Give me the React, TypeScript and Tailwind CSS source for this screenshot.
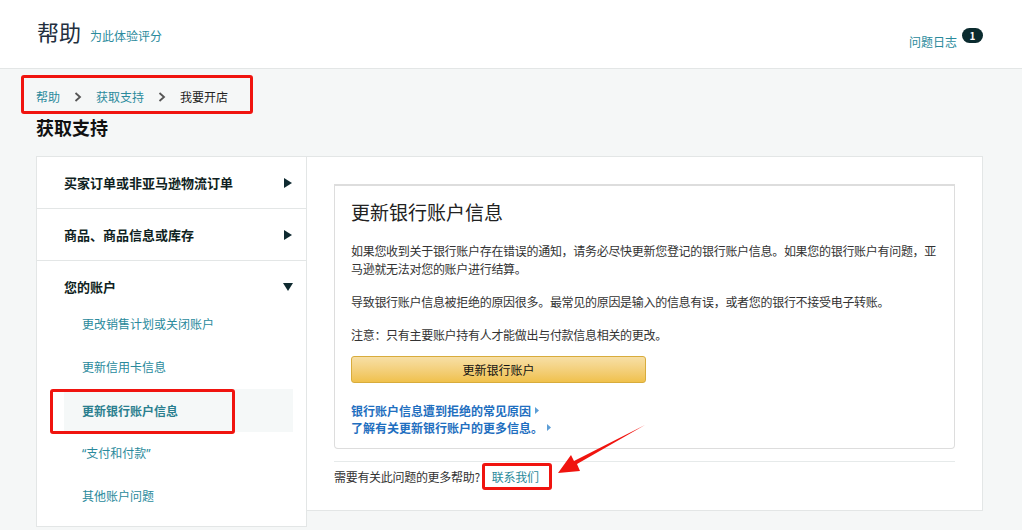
import React from "react";

const font = { fontFamily: '"Noto Sans CJK SC", "Noto Sans", sans-serif' };

const sections = [
  { title: "买家订单或非亚马逊物流订单", open: false },
  { title: "商品、商品信息或库存", open: false },
];

const accountItems = [
  "更改销售计划或关闭账户",
  "更新信用卡信息",
  "更新银行账户信息",
  "“支付和付款”",
  "其他账户问题",
];

function TriRight() {
  return (
    <svg width="8" height="10" viewBox="0 0 8 10" className="fill-[#0f2a30]">
      <path d="M0 0 L8 5 L0 10 Z" />
    </svg>
  );
}

function TriDown() {
  return (
    <svg width="10" height="8" viewBox="0 0 10 8" className="fill-[#0f2a30]">
      <path d="M0 0 L10 0 L5 8 Z" />
    </svg>
  );
}

function Caret() {
  return (
    <svg width="4" height="7" viewBox="0 0 4 7" className="ml-1 inline-block fill-[#5d9ed6]">
      <path d="M0 0 L4 3.5 L0 7 Z" />
    </svg>
  );
}

function Chevron() {
  return (
    <svg width="8" height="10" viewBox="0 0 8 10" className="mx-[14px] stroke-[#555]" fill="none" strokeWidth="1.8">
      <path d="M1.5 1 L6 5 L1.5 9" />
    </svg>
  );
}

export default function App() {
  return (
    <div className="relative min-h-[530px] w-[1022px] overflow-hidden bg-[#f5f7f7] text-[#111]" style={font}>
      <header className="flex h-[69px] items-center justify-between border-b border-[#e3e6e6] bg-white pl-[37px] pr-[39px]">
        <div className="flex items-baseline gap-[9px] pb-[4px]">
          <span className="text-[22px] leading-none text-[#232f3e]">帮助</span>
          <span className="text-[12px] text-[#2a8a9c]">为此体验评分</span>
        </div>
        <div className="flex items-start pt-[8px]">
          <span className="mt-[8px] text-[12px] text-[#2a8a9c]">问题日志</span>
          <span className="ml-[5px] mt-[3px] flex h-[15px] w-[21px] items-center justify-center rounded-full bg-[#0b2b2f] text-[10px] font-bold leading-none text-white">
            1
          </span>
        </div>
      </header>

      <div className="pl-[36px] pr-[39px]">
        <nav className="flex h-[55px] items-center text-[12px]">
          <span className="text-[#2a8a9c]">帮助</span>
          <Chevron />
          <span className="text-[#2a8a9c]">获取支持</span>
          <Chevron />
          <span className="text-[#222]">我要开店</span>
        </nav>
        <h1 className="-mt-[11px] text-[18px] font-bold leading-[28px] text-[#111]">获取支持</h1>

        <div className="mt-[15px] flex items-start">
          <aside className="w-[271px] border border-[#e3e6e6] bg-white">
            {sections.map((s) => (
              <div
                key={s.title}
                className="flex h-[52px] items-center justify-between border-b border-[#e3e6e6] pl-[27px] pr-[14px]"
              >
                <span className="text-[13px] font-bold text-[#0f1f22]">{s.title}</span>
                <TriRight />
              </div>
            ))}
            <div className="pb-[8px]">
              <div className="flex h-[52px] items-center justify-between pl-[27px] pr-[13px]">
                <span className="text-[13px] font-bold text-[#0f1f22]">您的账户</span>
                <TriDown />
              </div>
              <ul className="-mt-[10px] pl-[27px] pr-[13px]">
                {accountItems.map((item, i) => (
                  <li
                    key={item}
                    className={
                      i === 2
                        ? "flex h-[43px] items-center bg-[#f5f8f8] pl-[18px] text-[12px] font-bold text-[#2a7f8f]"
                        : "flex h-[43px] items-center pl-[18px] font-['Noto_Sans','Noto_Sans_CJK_SC',sans-serif] text-[12px] text-[#2a8a9c]"
                    }
                  >
                    {item}
                  </li>
                ))}
              </ul>
            </div>
          </aside>

          <main className="flex-1 border border-l-0 border-[#e3e6e6] bg-white px-[27px] pb-[24px] pt-[27px]">
            <section className="rounded-b-[4px] border border-t-2 border-[#dddddd] px-[16px] pb-[12px] pt-[12px]">
              <h2 className="text-[19px] leading-[28px] text-[#222]">更新银行账户信息</h2>
              <div className="mt-[16px] space-y-[15px] text-[12px] leading-[18px] tracking-[-0.3px] text-[#333]">
                <p>
                  如果您收到关于银行账户存在错误的通知，请务必尽快更新您登记的银行账户信息。如果您的银行账户有问题，亚马逊就无法对您的账户进行结算。
                </p>
                <p>导致银行账户信息被拒绝的原因很多。最常见的原因是输入的信息有误，或者您的银行不接受电子转账。</p>
                <p>注意：只有主要账户持有人才能做出与付款信息相关的更改。</p>
              </div>
              <button className="mt-[12px] h-[27px] w-[295px] rounded-[3px] border border-[#d8ac3c] bg-gradient-to-b from-[#f7dfa5] to-[#f0c14b] text-[12px] text-[#111]">
                更新银行账户
              </button>
              <div className="mt-[19px] text-[12px] font-bold leading-[17px] text-[#1f6fc0]">
                <div className="flex items-center">
                  银行账户信息遭到拒绝的常见原因
                  <Caret />
                </div>
                <div className="flex items-center">
                  了解有关更新银行账户的更多信息。
                  <Caret />
                </div>
              </div>
            </section>
            <div className="mt-[12px] border-t border-[#e6eaea] pt-[6px] text-[12px] tracking-[-0.3px] text-[#333]">
              需要有关此问题的更多帮助?
              <span className="ml-[12px] text-[#2a8a9c]">联系我们</span>
            </div>
          </main>
        </div>
      </div>

      {/* red annotations */}
      <div className="pointer-events-none absolute left-[21px] top-[75px] h-[39px] w-[232px] rounded-[3px] border-[3px] border-[#f0140f]" />
      <div className="pointer-events-none absolute left-[50px] top-[389px] h-[45px] w-[185px] rounded-[3px] border-[3px] border-[#f0140f]" />
      <div className="pointer-events-none absolute left-[482px] top-[463px] h-[27px] w-[70px] rounded-[3px] border-[3px] border-[#f0140f]" />
      <svg className="pointer-events-none absolute left-[555px] top-[420px]" width="95" height="60" viewBox="0 0 95 60">
        <path d="M90 5 L22 44 L25 51 L3 53 L16 35 L19 41 Z" fill="#f0140f" />
      </svg>
    </div>
  );
}
